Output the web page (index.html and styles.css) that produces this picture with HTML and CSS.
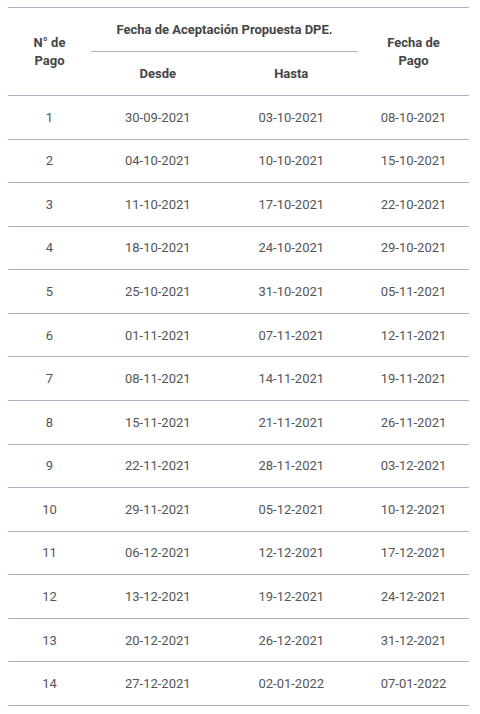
FILE: index.html
```html
<!DOCTYPE html>
<html lang="es">
<head>
<meta charset="utf-8">
<link rel="stylesheet" href="styles.css">
</head>
<body>
<table class="pagos">
  <thead>
    <tr class="h1">
      <th rowspan="2" class="c1">N° de<br>Pago</th>
      <th colspan="2" class="grp"><span>Fecha de Aceptación Propuesta DPE.</span></th>
      <th rowspan="2" class="c4">Fecha de<br>Pago</th>
    </tr>
    <tr class="h2">
      <th class="c2">Desde</th>
      <th class="c3">Hasta</th>
    </tr>
  </thead>
  <tbody>
    <tr><td>1</td><td>30-09-2021</td><td>03-10-2021</td><td>08-10-2021</td></tr>
    <tr><td>2</td><td>04-10-2021</td><td>10-10-2021</td><td>15-10-2021</td></tr>
    <tr><td>3</td><td>11-10-2021</td><td>17-10-2021</td><td>22-10-2021</td></tr>
    <tr><td>4</td><td>18-10-2021</td><td>24-10-2021</td><td>29-10-2021</td></tr>
    <tr><td>5</td><td>25-10-2021</td><td>31-10-2021</td><td>05-11-2021</td></tr>
    <tr><td>6</td><td>01-11-2021</td><td>07-11-2021</td><td>12-11-2021</td></tr>
    <tr><td>7</td><td>08-11-2021</td><td>14-11-2021</td><td>19-11-2021</td></tr>
    <tr><td>8</td><td>15-11-2021</td><td>21-11-2021</td><td>26-11-2021</td></tr>
    <tr><td>9</td><td>22-11-2021</td><td>28-11-2021</td><td>03-12-2021</td></tr>
    <tr><td>10</td><td>29-11-2021</td><td>05-12-2021</td><td>10-12-2021</td></tr>
    <tr><td>11</td><td>06-12-2021</td><td>12-12-2021</td><td>17-12-2021</td></tr>
    <tr><td>12</td><td>13-12-2021</td><td>19-12-2021</td><td>24-12-2021</td></tr>
    <tr><td>13</td><td>20-12-2021</td><td>26-12-2021</td><td>31-12-2021</td></tr>
    <tr><td>14</td><td>27-12-2021</td><td>02-01-2022</td><td>07-01-2022</td></tr>
  </tbody>
</table>
</body>
</html>
```
FILE: styles.css
```css
html, body {
  margin: 0;
  padding: 0;
  background: #fff;
}
body {
  padding: 7px 11px 0 8px;
  font-family: Roboto, "Liberation Sans", sans-serif;
}
.pagos {
  width: 461px;
  border-collapse: collapse;
  table-layout: fixed;
  border-top: 1px solid #a9b3c3;
}
.pagos th, .pagos td {
  padding: 0;
  text-align: center;
  vertical-align: middle;
}
.pagos th {
  font-size: 13px;
  font-weight: 700;
  color: #454545;
  line-height: 18px;
}
.c1 { width: 83px; }
.c2, .c3 { width: 133.5px; }
.c4 { width: 111px; }
.h1 th { height: 43px; }
.h2 th { height: 43px; }
.pagos thead tr.h2 th, .pagos thead th.c1, .pagos thead th.c4 {
  border-bottom: 1px solid #a9b3c3;
}
.grp {
  border-bottom: 1px solid #a9b3c3;
}
.pagos td {
  font-size: 13px;
  color: #555;
  height: 42.57px;
  border-bottom: 1px solid #a9b3c3;
}
```
